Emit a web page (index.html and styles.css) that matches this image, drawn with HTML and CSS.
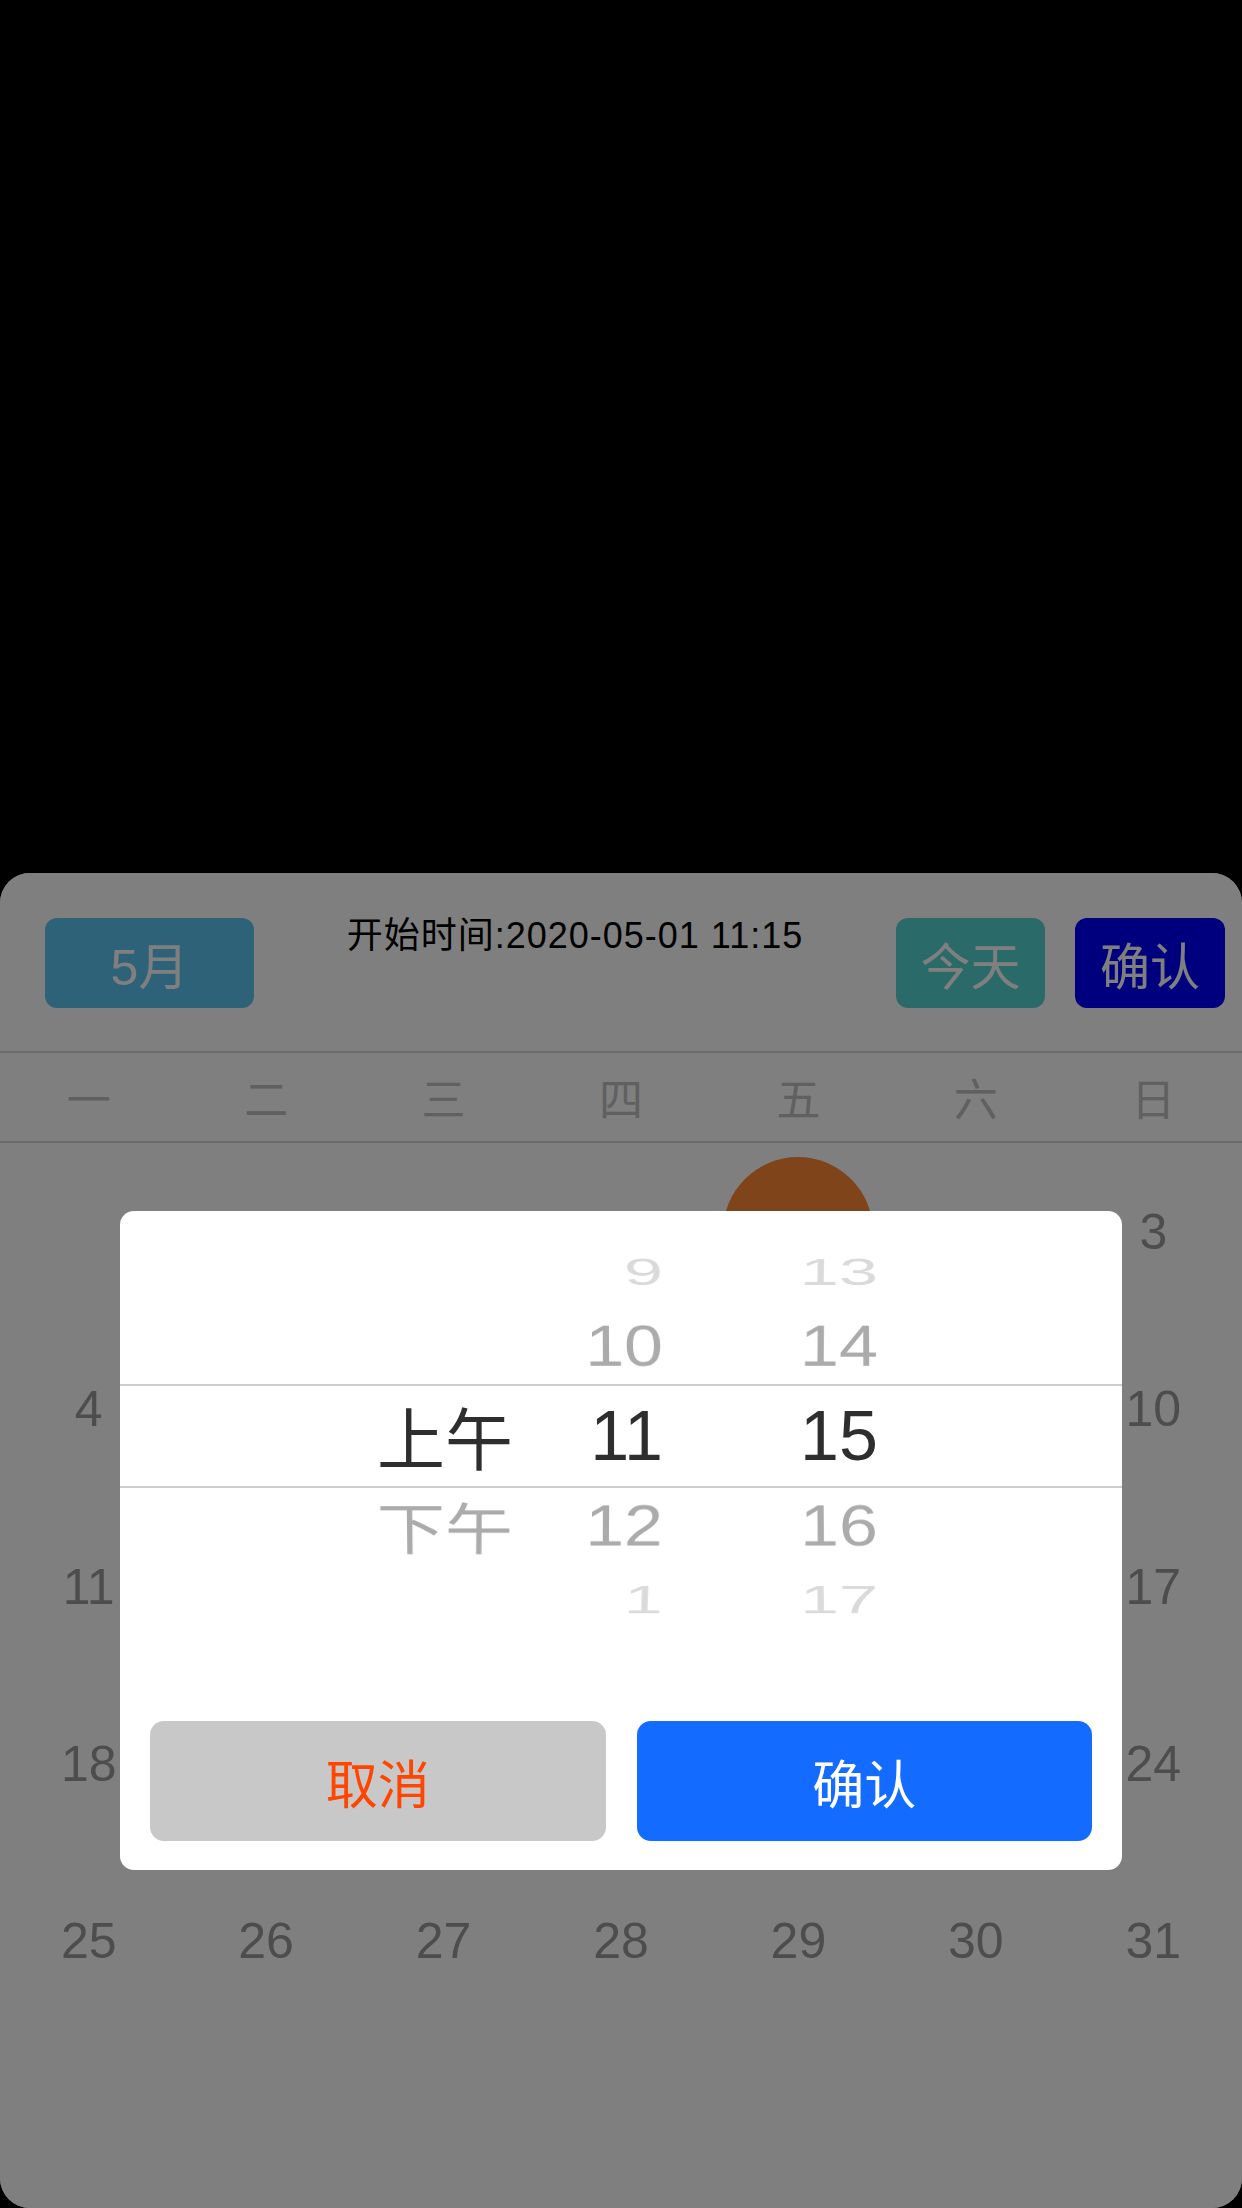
FILE: index.html
```html
<!DOCTYPE html>
<html lang="zh-CN">
<head>
<meta charset="utf-8">
<title>开始时间</title>
<link rel="stylesheet" href="styles.css">
</head>
<body>
<div class="screen">
  <div class="top-space"></div>
  <div class="sheet">
    <div class="header">
      <div class="hbtn month">5月</div>
      <div class="title">开始时间:2020-05-01 11:15</div>
      <div class="hbtn today">今天</div>
      <div class="hbtn confirm">确认</div>
    </div>
    <div class="weekdays">
      <div>一</div><div>二</div><div>三</div><div>四</div><div>五</div><div>六</div><div>日</div>
    </div>
    <div class="days">
      <div class="day"></div><div class="day"></div><div class="day"></div><div class="day"></div>
      <div class="day"><span class="num selected">1</span></div>
      <div class="day"><span class="num">2</span></div>
      <div class="day"><span class="num">3</span></div>
      <div class="day"><span class="num">4</span></div>
      <div class="day"><span class="num">5</span></div>
      <div class="day"><span class="num">6</span></div>
      <div class="day"><span class="num">7</span></div>
      <div class="day"><span class="num">8</span></div>
      <div class="day"><span class="num">9</span></div>
      <div class="day"><span class="num">10</span></div>
      <div class="day"><span class="num">11</span></div>
      <div class="day"><span class="num">12</span></div>
      <div class="day"><span class="num">13</span></div>
      <div class="day"><span class="num">14</span></div>
      <div class="day"><span class="num">15</span></div>
      <div class="day"><span class="num">16</span></div>
      <div class="day"><span class="num">17</span></div>
      <div class="day"><span class="num">18</span></div>
      <div class="day"><span class="num">19</span></div>
      <div class="day"><span class="num">20</span></div>
      <div class="day"><span class="num">21</span></div>
      <div class="day"><span class="num">22</span></div>
      <div class="day"><span class="num">23</span></div>
      <div class="day"><span class="num">24</span></div>
      <div class="day"><span class="num">25</span></div>
      <div class="day"><span class="num">26</span></div>
      <div class="day"><span class="num">27</span></div>
      <div class="day"><span class="num">28</span></div>
      <div class="day"><span class="num">29</span></div>
      <div class="day"><span class="num">30</span></div>
      <div class="day"><span class="num">31</span></div>
    </div>

    <div class="mask">
      <div class="dialog">
        <div class="wheel">
          <div class="wrow outer up">
            <div class="cell ampm"></div><div class="cell hour">9</div><div class="cell minute">13</div>
          </div>
          <div class="wrow inner up">
            <div class="cell ampm"></div><div class="cell hour">10</div><div class="cell minute">14</div>
          </div>
          <div class="wrow current">
            <div class="cell ampm">上午</div><div class="cell hour">11</div><div class="cell minute">15</div>
          </div>
          <div class="wrow inner down">
            <div class="cell ampm">下午</div><div class="cell hour">12</div><div class="cell minute">16</div>
          </div>
          <div class="wrow outer down">
            <div class="cell ampm"></div><div class="cell hour">1</div><div class="cell minute">17</div>
          </div>
        </div>
        <div class="actions">
          <div class="abtn cancel">取消</div>
          <div class="abtn ok">确认</div>
        </div>
      </div>
    </div>
  </div>
</div>
</body>
</html>
```
FILE: styles.css
```css
* { box-sizing: border-box; }

html, body {
  margin: 0;
  padding: 0;
  background: #000;
}

body {
  font-family: "Liberation Sans", "Noto Sans CJK SC", sans-serif;
}

.screen {
  width: 1242px;
  height: 2208px;
  display: flex;
  flex-direction: column;
  background: #000;
}

.top-space {
  flex: 1;
}

.sheet {
  position: relative;
  height: 1335px;
  background: #fff;
  border-radius: 30px;
  overflow: hidden;
}

/* header */
.header {
  height: 180px;
  display: flex;
  align-items: flex-start;
  padding: 45px 17px 0 45px;
  border-bottom: 2px solid #d4d4d4;
}

.hbtn {
  height: 90px;
  border-radius: 12px;
  display: flex;
  align-items: center;
  justify-content: center;
  color: #fff;
  font-size: 50px;
  font-family: "Liberation Sans", "Noto Sans CJK SC", sans-serif;
}

.month {
  width: 209px;
  background: #5cc4f2;
}

.today {
  width: 149px;
  background: #54d4d0;
}

.confirm {
  width: 150px;
  margin-left: 30px;
  background: #0000ff;
}

.title {
  flex: 1;
  text-align: center;
  font-size: 36px;
  line-height: 36px;
  letter-spacing: 1px;
  color: #000;
}

/* weekdays */
.weekdays {
  height: 90px;
  display: grid;
  grid-template-columns: repeat(7, 1fr);
  align-items: center;
  justify-items: center;
  border-bottom: 2px solid #d4d4d4;
  font-family: "Noto Sans CJK SC", sans-serif;
  font-size: 44px;
  color: #c0c0c0;
}

/* days */
.days {
  display: grid;
  grid-template-columns: repeat(7, 1fr);
  grid-auto-rows: 177.43px;
}

.day {
  display: flex;
  align-items: center;
  justify-content: center;
}

.num {
  font-size: 50px;
  color: #9a9a9a;
}

.num.selected {
  width: 150px;
  height: 150px;
  border-radius: 50%;
  background: #ff8834;
  color: #fff;
  display: flex;
  align-items: center;
  justify-content: center;
}

/* dim mask + dialog */
.mask {
  position: absolute;
  inset: 0;
  background: rgba(0, 0, 0, 0.5);
  display: flex;
  align-items: center;
  justify-content: center;
}

.dialog {
  width: 1002px;
  background: #fff;
  border-radius: 14px;
  padding: 45px 0 29px;
}

.wheel {
  height: 360px;
  overflow: hidden;
  display: flex;
  flex-direction: column;
  justify-content: center;
}

.wrow {
  flex-shrink: 0;
  display: flex;
  align-items: center;
  padding-left: 255px;
  font-size: 70px;
  line-height: 1;
}

.wrow.outer { height: 72px; color: #dadada; }
.wrow.inner { height: 76px; color: #ababab; }
.wrow.current {
  height: 104px;
  color: #2e2e2e;
  border-top: 2px solid #cfcfcf;
  border-bottom: 2px solid #cfcfcf;
}

.wrow.outer.up .cell   { transform: perspective(2400px) rotateX(58deg); }
.wrow.inner.up .cell   { transform: perspective(2400px) rotateX(35deg); }
.wrow.inner.down .cell { transform: perspective(2400px) rotateX(-35deg); }
.wrow.outer.down .cell { transform: perspective(2400px) rotateX(-56deg); }

.cell {
  white-space: nowrap;
}

.ampm {
  width: 140px;
  text-align: center;
  font-family: "Noto Sans CJK SC", sans-serif;
  font-size: 68px;
}

.hour {
  width: 148px;
  text-align: right;
}

.minute {
  width: 100px;
  margin-left: 137px;
  text-align: left;
}

.actions {
  margin-top: 105px;
  display: flex;
  gap: 31px;
  padding: 0 30px 0 30px;
}

.abtn {
  flex: 1;
  height: 120px;
  border-radius: 14px;
  display: flex;
  align-items: center;
  justify-content: center;
  font-family: "Noto Sans CJK SC", sans-serif;
  font-size: 52px;
}

.cancel {
  background: #c8c8c8;
  color: #ff4500;
}

.ok {
  background: #136cff;
  color: #fff;
}
```
